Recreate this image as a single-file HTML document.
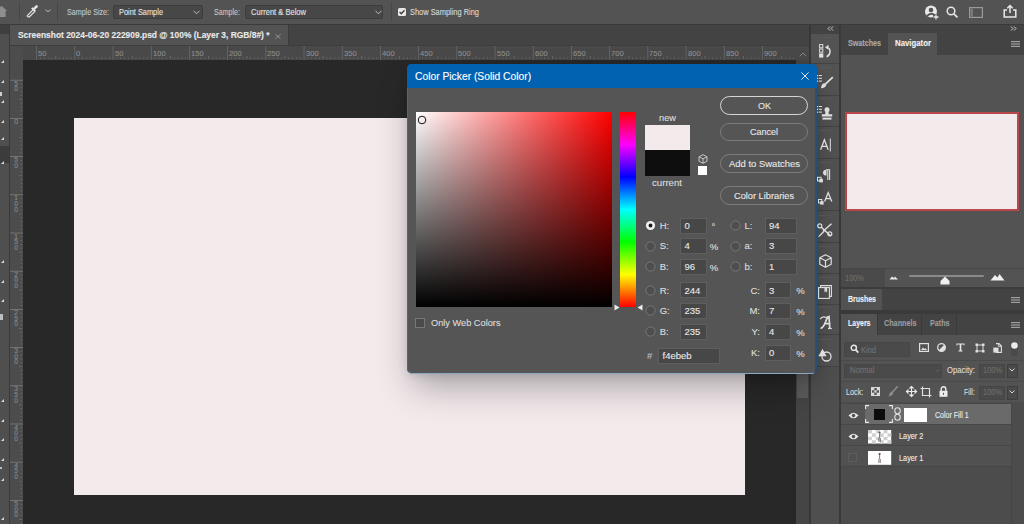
<!DOCTYPE html>
<html><head><meta charset="utf-8">
<style>
*{margin:0;padding:0;box-sizing:border-box}
html,body{width:1024px;height:524px;overflow:hidden;background:#282828;font-family:"Liberation Sans",sans-serif;color:#d8d8d8}
.a{position:absolute}
.t{position:absolute;white-space:nowrap;line-height:1;transform-origin:0 0;-webkit-text-stroke:0.12px currentColor}
svg{position:absolute;overflow:visible}
</style></head><body>
<div class="a" style="left:0px;top:0px;width:1024px;height:24px;background:#535353;"></div>
<div class="a" style="left:0px;top:24px;width:1024px;height:1px;background:#3a3a3a;"></div>
<div class="a" style="left:19px;top:2px;width:1px;height:19px;background:#474747;"></div>
<div class="a" style="left:57px;top:2px;width:1px;height:19px;background:#474747;"></div>
<div class="a" style="left:391px;top:2px;width:1px;height:19px;background:#474747;"></div>
<svg style="left:0;top:5px" width="10" height="13" viewBox="0 0 10 13"><path d="M-3 5.5 L1.5 0.8 L7.2 6 L5.6 6 L5.6 12 L-3 12 Z" fill="#8e8e8e"/></svg>
<svg style="left:24.8px;top:2.5px" width="14" height="15" viewBox="0 0 15 16"><g transform="translate(7.5 8) scale(0.9) translate(-7.5 -8)"><path d="M2.5 13.5 L9 7 L11 9 L4.5 15.5 Q2.8 15.9 2 15 Q1.6 14.3 2.5 13.5 Z" fill="none" stroke="#e6e6e6" stroke-width="1.5"/><path d="M8 6 L12 2 Q13 1.2 14 2 Q14.8 3 14 4 L10 8 Z" fill="#e6e6e6"/><path d="M7.2 4.8 L11.2 8.8" stroke="#e6e6e6" stroke-width="2"/></g></svg>
<svg style="left:45px;top:9px" width="6" height="4" viewBox="0 0 6 4"><path d="M0.5 0.6 Q3 4.2 5.5 0.6" fill="none" stroke="#bdbdbd" stroke-width="1"/></svg>
<div id="t0" class="t" style="left:66.60px;transform:scaleX(0.8104);top:8.00px;font-size:8.8px;color:#c4c4c4;font-weight:normal;">Sample Size:</div>
<div class="a" style="left:113px;top:5px;width:90px;height:14px;background:#474747;border:1px solid #3d3d3d;border-radius:2px"></div>
<div id="t1" class="t" style="left:119.30px;transform:scaleX(0.8408);top:8.00px;font-size:8.8px;color:#e2e2e2;font-weight:normal;">Point Sample</div>
<svg style="left:193px;top:10px" width="7" height="5" viewBox="0 0 7 5"><path d="M0.5 0.8 L3.5 3.8 L6.5 0.8" fill="none" stroke="#bdbdbd" stroke-width="1"/></svg>
<div id="t2" class="t" style="left:213.70px;transform:scaleX(0.8054);top:8.00px;font-size:8.8px;color:#c4c4c4;font-weight:normal;">Sample:</div>
<div class="a" style="left:245px;top:5px;width:138px;height:14px;background:#474747;border:1px solid #3d3d3d;border-radius:2px"></div>
<div id="t3" class="t" style="left:251.40px;transform:scaleX(0.8585);top:8.00px;font-size:8.8px;color:#e2e2e2;font-weight:normal;">Current &amp; Below</div>
<svg style="left:375px;top:10px" width="7" height="5" viewBox="0 0 7 5"><path d="M0.5 0.8 L3.5 3.8 L6.5 0.8" fill="none" stroke="#bdbdbd" stroke-width="1"/></svg>
<div class="a" style="left:398px;top:7.5px;width:8px;height:8px;background:#e8e8e8;border-radius:1.5px"></div>
<svg style="left:398px;top:7.5px" width="8" height="8" viewBox="0 0 8 8"><path d="M1.6 4 L3.3 5.7 L6.5 2.3" fill="none" stroke="#3a3a3a" stroke-width="1.3"/></svg>
<div id="t4" class="t" style="left:409.50px;transform:scaleX(0.8448);top:8.00px;font-size:8.8px;color:#d8d8d8;font-weight:normal;">Show Sampling Ring</div>
<svg style="left:924px;top:5px" width="16" height="15" viewBox="0 0 16 15"><circle cx="7" cy="6.5" r="6" fill="#e8e8e8"/><circle cx="7" cy="5" r="2.3" fill="#535353"/><path d="M3 11 Q7 7 10.5 10" stroke="#535353" stroke-width="2" fill="none"/><path d="M12 9 V15 M9 12 H15" stroke="#535353" stroke-width="3.5"/><path d="M12 9.5 V14.5 M9.5 12 H14.5" stroke="#e8e8e8" stroke-width="1.3"/></svg>
<svg style="left:946px;top:6px" width="13" height="12" viewBox="0 0 13 12"><circle cx="5" cy="5" r="3.8" fill="none" stroke="#e6e6e6" stroke-width="1.5"/><path d="M7.8 7.8 L11.5 11.3" stroke="#e6e6e6" stroke-width="1.7"/></svg>
<svg style="left:969px;top:7px" width="14" height="11" viewBox="0 0 14 11"><rect x="0.6" y="0.6" width="12.8" height="9.8" fill="none" stroke="#9a9a9a" stroke-width="1.2"/><rect x="1.5" y="1.5" width="2.5" height="8" fill="#7a7a7a"/></svg>
<svg style="left:1003px;top:4px" width="14" height="14" viewBox="0 0 14 14"><path d="M4 6 H1.2 V13 H12.8 V6 H10" fill="none" stroke="#e8e8e8" stroke-width="1.5"/><path d="M7 9 V1.5 M4.3 4.2 L7 1.5 L9.7 4.2" fill="none" stroke="#e8e8e8" stroke-width="1.5"/></svg>
<div class="a" style="left:0px;top:25px;width:9px;height:499px;background:#4f4f4f;"></div>
<div class="a" style="left:0px;top:25px;width:9px;height:9px;background:#3f3f3f;"></div>
<div class="a" style="left:9px;top:25px;width:1px;height:499px;background:#3a3a3a;"></div>
<div class="a" style="left:0px;top:146px;width:9px;height:17px;background:#3c3c3c;"></div>
<div class="a" style="left:0px;top:92px;width:2px;height:4px;background:#cfcfcf;"></div>
<div class="a" style="left:0px;top:314px;width:3px;height:6px;background:#bdbdbd;"></div>
<div class="a" style="left:0px;top:467px;width:2px;height:2px;background:#bdbdbd;"></div>
<svg style="left:0.5px;top:60px" width="3" height="3" viewBox="0 0 3 3"><path d="M3 0 V3 H0 Z" fill="#d8d8d8"/></svg>
<svg style="left:0.5px;top:80px" width="3" height="3" viewBox="0 0 3 3"><path d="M3 0 V3 H0 Z" fill="#d8d8d8"/></svg>
<svg style="left:0.5px;top:100px" width="3" height="3" viewBox="0 0 3 3"><path d="M3 0 V3 H0 Z" fill="#d8d8d8"/></svg>
<svg style="left:0.5px;top:120px" width="3" height="3" viewBox="0 0 3 3"><path d="M3 0 V3 H0 Z" fill="#d8d8d8"/></svg>
<svg style="left:0.5px;top:137px" width="3" height="3" viewBox="0 0 3 3"><path d="M3 0 V3 H0 Z" fill="#d8d8d8"/></svg>
<svg style="left:0.5px;top:161px" width="3" height="3" viewBox="0 0 3 3"><path d="M3 0 V3 H0 Z" fill="#d8d8d8"/></svg>
<svg style="left:0.5px;top:260px" width="3" height="3" viewBox="0 0 3 3"><path d="M3 0 V3 H0 Z" fill="#d8d8d8"/></svg>
<svg style="left:0.5px;top:280px" width="3" height="3" viewBox="0 0 3 3"><path d="M3 0 V3 H0 Z" fill="#d8d8d8"/></svg>
<svg style="left:0.5px;top:299px" width="3" height="3" viewBox="0 0 3 3"><path d="M3 0 V3 H0 Z" fill="#d8d8d8"/></svg>
<svg style="left:0.5px;top:399px" width="3" height="3" viewBox="0 0 3 3"><path d="M3 0 V3 H0 Z" fill="#d8d8d8"/></svg>
<svg style="left:0.5px;top:419px" width="3" height="3" viewBox="0 0 3 3"><path d="M3 0 V3 H0 Z" fill="#d8d8d8"/></svg>
<svg style="left:0.5px;top:438px" width="3" height="3" viewBox="0 0 3 3"><path d="M3 0 V3 H0 Z" fill="#d8d8d8"/></svg>
<svg style="left:0.5px;top:458px" width="3" height="3" viewBox="0 0 3 3"><path d="M3 0 V3 H0 Z" fill="#d8d8d8"/></svg>
<svg style="left:0.5px;top:478px" width="3" height="3" viewBox="0 0 3 3"><path d="M3 0 V3 H0 Z" fill="#d8d8d8"/></svg>
<svg style="left:0.5px;top:517px" width="3" height="3" viewBox="0 0 3 3"><path d="M3 0 V3 H0 Z" fill="#d8d8d8"/></svg>
<div class="a" style="left:10px;top:25px;width:799px;height:21px;background:#434343;"></div>
<div class="a" style="left:10px;top:25px;width:278px;height:21px;background:#535353;"></div>
<div class="a" style="left:288px;top:25px;width:1px;height:21px;background:#3c3c3c;"></div>
<div id="t5" class="t" style="left:17.50px;transform:scaleX(0.9794);top:31.00px;font-size:8.6px;color:#e8e8e8;font-weight:bold;">Screenshot 2024-06-20 222909.psd @ 100% (Layer 3, RGB/8#) *</div>
<svg style="left:275px;top:33.5px" width="6" height="5" viewBox="0 0 6 5"><path d="M0.5 0.3 L5.5 4.7 M5.5 0.3 L0.5 4.7" stroke="#9a9a9a" stroke-width="0.9"/></svg>
<div class="a" style="left:10px;top:45px;width:799px;height:1px;background:#3d3d3d;"></div>
<div class="a" style="left:10px;top:46px;width:799px;height:14px;background:#494949;"></div>
<div class="a" style="left:10px;top:46px;width:13px;height:478px;background:#4c4c4c;"></div>
<div id="t6" class="t" style="left:38.10px;transform:scaleX(0.9432);top:50.00px;font-size:8px;color:#8e8e8e;font-weight:normal;">50</div>
<div id="t7" class="t" style="left:76.30px;transform:scaleX(0.9432);top:50.00px;font-size:8px;color:#8e8e8e;font-weight:normal;">0</div>
<div id="t8" class="t" style="left:114.50px;transform:scaleX(0.9432);top:50.00px;font-size:8px;color:#8e8e8e;font-weight:normal;">50</div>
<div id="t9" class="t" style="left:152.70px;transform:scaleX(0.9432);top:50.00px;font-size:8px;color:#8e8e8e;font-weight:normal;">100</div>
<div id="t10" class="t" style="left:190.90px;transform:scaleX(0.9432);top:50.00px;font-size:8px;color:#8e8e8e;font-weight:normal;">150</div>
<div id="t11" class="t" style="left:229.10px;transform:scaleX(0.9432);top:50.00px;font-size:8px;color:#8e8e8e;font-weight:normal;">200</div>
<div id="t12" class="t" style="left:267.30px;transform:scaleX(0.9432);top:50.00px;font-size:8px;color:#8e8e8e;font-weight:normal;">250</div>
<div id="t13" class="t" style="left:305.50px;transform:scaleX(0.9432);top:50.00px;font-size:8px;color:#8e8e8e;font-weight:normal;">300</div>
<div id="t14" class="t" style="left:343.70px;transform:scaleX(0.9432);top:50.00px;font-size:8px;color:#8e8e8e;font-weight:normal;">350</div>
<div id="t15" class="t" style="left:381.90px;transform:scaleX(0.9432);top:50.00px;font-size:8px;color:#8e8e8e;font-weight:normal;">400</div>
<div id="t16" class="t" style="left:420.10px;transform:scaleX(0.9432);top:50.00px;font-size:8px;color:#8e8e8e;font-weight:normal;">450</div>
<div id="t17" class="t" style="left:458.30px;transform:scaleX(0.9432);top:50.00px;font-size:8px;color:#8e8e8e;font-weight:normal;">500</div>
<div id="t18" class="t" style="left:496.50px;transform:scaleX(0.9432);top:50.00px;font-size:8px;color:#8e8e8e;font-weight:normal;">550</div>
<div id="t19" class="t" style="left:534.70px;transform:scaleX(0.9432);top:50.00px;font-size:8px;color:#8e8e8e;font-weight:normal;">600</div>
<div id="t20" class="t" style="left:572.90px;transform:scaleX(0.9432);top:50.00px;font-size:8px;color:#8e8e8e;font-weight:normal;">650</div>
<div id="t21" class="t" style="left:611.10px;transform:scaleX(0.9432);top:50.00px;font-size:8px;color:#8e8e8e;font-weight:normal;">700</div>
<div id="t22" class="t" style="left:649.30px;transform:scaleX(0.9432);top:50.00px;font-size:8px;color:#8e8e8e;font-weight:normal;">750</div>
<div id="t23" class="t" style="left:687.50px;transform:scaleX(0.9432);top:50.00px;font-size:8px;color:#8e8e8e;font-weight:normal;">800</div>
<div id="t24" class="t" style="left:725.70px;transform:scaleX(0.9432);top:50.00px;font-size:8px;color:#8e8e8e;font-weight:normal;">850</div>
<div id="t25" class="t" style="left:763.90px;transform:scaleX(0.9432);top:50.00px;font-size:8px;color:#8e8e8e;font-weight:normal;">900</div>
<svg style="left:0;top:0" width="1024" height="524"><rect x="36.3" y="46" width="0.7" height="14" fill="#6e6e6e"/><rect x="40.1" y="57.5" width="0.8" height="1.5" fill="#6e6e6e"/><rect x="43.9" y="57.5" width="0.8" height="1.5" fill="#6e6e6e"/><rect x="47.8" y="57.5" width="0.8" height="1.5" fill="#6e6e6e"/><rect x="51.6" y="57.5" width="0.8" height="1.5" fill="#6e6e6e"/><rect x="55.4" y="56" width="0.8" height="3" fill="#6e6e6e"/><rect x="59.2" y="57.5" width="0.8" height="1.5" fill="#6e6e6e"/><rect x="63.0" y="57.5" width="0.8" height="1.5" fill="#6e6e6e"/><rect x="66.9" y="57.5" width="0.8" height="1.5" fill="#6e6e6e"/><rect x="70.7" y="57.5" width="0.8" height="1.5" fill="#6e6e6e"/><rect x="74.5" y="46" width="0.7" height="14" fill="#6e6e6e"/><rect x="78.3" y="57.5" width="0.8" height="1.5" fill="#6e6e6e"/><rect x="82.1" y="57.5" width="0.8" height="1.5" fill="#6e6e6e"/><rect x="86.0" y="57.5" width="0.8" height="1.5" fill="#6e6e6e"/><rect x="89.8" y="57.5" width="0.8" height="1.5" fill="#6e6e6e"/><rect x="93.6" y="56" width="0.8" height="3" fill="#6e6e6e"/><rect x="97.4" y="57.5" width="0.8" height="1.5" fill="#6e6e6e"/><rect x="101.2" y="57.5" width="0.8" height="1.5" fill="#6e6e6e"/><rect x="105.1" y="57.5" width="0.8" height="1.5" fill="#6e6e6e"/><rect x="108.9" y="57.5" width="0.8" height="1.5" fill="#6e6e6e"/><rect x="112.7" y="46" width="0.7" height="14" fill="#6e6e6e"/><rect x="116.5" y="57.5" width="0.8" height="1.5" fill="#6e6e6e"/><rect x="120.3" y="57.5" width="0.8" height="1.5" fill="#6e6e6e"/><rect x="124.2" y="57.5" width="0.8" height="1.5" fill="#6e6e6e"/><rect x="128.0" y="57.5" width="0.8" height="1.5" fill="#6e6e6e"/><rect x="131.8" y="56" width="0.8" height="3" fill="#6e6e6e"/><rect x="135.6" y="57.5" width="0.8" height="1.5" fill="#6e6e6e"/><rect x="139.4" y="57.5" width="0.8" height="1.5" fill="#6e6e6e"/><rect x="143.3" y="57.5" width="0.8" height="1.5" fill="#6e6e6e"/><rect x="147.1" y="57.5" width="0.8" height="1.5" fill="#6e6e6e"/><rect x="150.9" y="46" width="0.7" height="14" fill="#6e6e6e"/><rect x="154.7" y="57.5" width="0.8" height="1.5" fill="#6e6e6e"/><rect x="158.5" y="57.5" width="0.8" height="1.5" fill="#6e6e6e"/><rect x="162.4" y="57.5" width="0.8" height="1.5" fill="#6e6e6e"/><rect x="166.2" y="57.5" width="0.8" height="1.5" fill="#6e6e6e"/><rect x="170.0" y="56" width="0.8" height="3" fill="#6e6e6e"/><rect x="173.8" y="57.5" width="0.8" height="1.5" fill="#6e6e6e"/><rect x="177.6" y="57.5" width="0.8" height="1.5" fill="#6e6e6e"/><rect x="181.5" y="57.5" width="0.8" height="1.5" fill="#6e6e6e"/><rect x="185.3" y="57.5" width="0.8" height="1.5" fill="#6e6e6e"/><rect x="189.1" y="46" width="0.7" height="14" fill="#6e6e6e"/><rect x="192.9" y="57.5" width="0.8" height="1.5" fill="#6e6e6e"/><rect x="196.7" y="57.5" width="0.8" height="1.5" fill="#6e6e6e"/><rect x="200.6" y="57.5" width="0.8" height="1.5" fill="#6e6e6e"/><rect x="204.4" y="57.5" width="0.8" height="1.5" fill="#6e6e6e"/><rect x="208.2" y="56" width="0.8" height="3" fill="#6e6e6e"/><rect x="212.0" y="57.5" width="0.8" height="1.5" fill="#6e6e6e"/><rect x="215.8" y="57.5" width="0.8" height="1.5" fill="#6e6e6e"/><rect x="219.7" y="57.5" width="0.8" height="1.5" fill="#6e6e6e"/><rect x="223.5" y="57.5" width="0.8" height="1.5" fill="#6e6e6e"/><rect x="227.3" y="46" width="0.7" height="14" fill="#6e6e6e"/><rect x="231.1" y="57.5" width="0.8" height="1.5" fill="#6e6e6e"/><rect x="234.9" y="57.5" width="0.8" height="1.5" fill="#6e6e6e"/><rect x="238.8" y="57.5" width="0.8" height="1.5" fill="#6e6e6e"/><rect x="242.6" y="57.5" width="0.8" height="1.5" fill="#6e6e6e"/><rect x="246.4" y="56" width="0.8" height="3" fill="#6e6e6e"/><rect x="250.2" y="57.5" width="0.8" height="1.5" fill="#6e6e6e"/><rect x="254.0" y="57.5" width="0.8" height="1.5" fill="#6e6e6e"/><rect x="257.9" y="57.5" width="0.8" height="1.5" fill="#6e6e6e"/><rect x="261.7" y="57.5" width="0.8" height="1.5" fill="#6e6e6e"/><rect x="265.5" y="46" width="0.7" height="14" fill="#6e6e6e"/><rect x="269.3" y="57.5" width="0.8" height="1.5" fill="#6e6e6e"/><rect x="273.1" y="57.5" width="0.8" height="1.5" fill="#6e6e6e"/><rect x="277.0" y="57.5" width="0.8" height="1.5" fill="#6e6e6e"/><rect x="280.8" y="57.5" width="0.8" height="1.5" fill="#6e6e6e"/><rect x="284.6" y="56" width="0.8" height="3" fill="#6e6e6e"/><rect x="288.4" y="57.5" width="0.8" height="1.5" fill="#6e6e6e"/><rect x="292.2" y="57.5" width="0.8" height="1.5" fill="#6e6e6e"/><rect x="296.1" y="57.5" width="0.8" height="1.5" fill="#6e6e6e"/><rect x="299.9" y="57.5" width="0.8" height="1.5" fill="#6e6e6e"/><rect x="303.7" y="46" width="0.7" height="14" fill="#6e6e6e"/><rect x="307.5" y="57.5" width="0.8" height="1.5" fill="#6e6e6e"/><rect x="311.3" y="57.5" width="0.8" height="1.5" fill="#6e6e6e"/><rect x="315.2" y="57.5" width="0.8" height="1.5" fill="#6e6e6e"/><rect x="319.0" y="57.5" width="0.8" height="1.5" fill="#6e6e6e"/><rect x="322.8" y="56" width="0.8" height="3" fill="#6e6e6e"/><rect x="326.6" y="57.5" width="0.8" height="1.5" fill="#6e6e6e"/><rect x="330.4" y="57.5" width="0.8" height="1.5" fill="#6e6e6e"/><rect x="334.3" y="57.5" width="0.8" height="1.5" fill="#6e6e6e"/><rect x="338.1" y="57.5" width="0.8" height="1.5" fill="#6e6e6e"/><rect x="341.9" y="46" width="0.7" height="14" fill="#6e6e6e"/><rect x="345.7" y="57.5" width="0.8" height="1.5" fill="#6e6e6e"/><rect x="349.5" y="57.5" width="0.8" height="1.5" fill="#6e6e6e"/><rect x="353.4" y="57.5" width="0.8" height="1.5" fill="#6e6e6e"/><rect x="357.2" y="57.5" width="0.8" height="1.5" fill="#6e6e6e"/><rect x="361.0" y="56" width="0.8" height="3" fill="#6e6e6e"/><rect x="364.8" y="57.5" width="0.8" height="1.5" fill="#6e6e6e"/><rect x="368.6" y="57.5" width="0.8" height="1.5" fill="#6e6e6e"/><rect x="372.5" y="57.5" width="0.8" height="1.5" fill="#6e6e6e"/><rect x="376.3" y="57.5" width="0.8" height="1.5" fill="#6e6e6e"/><rect x="380.1" y="46" width="0.7" height="14" fill="#6e6e6e"/><rect x="383.9" y="57.5" width="0.8" height="1.5" fill="#6e6e6e"/><rect x="387.7" y="57.5" width="0.8" height="1.5" fill="#6e6e6e"/><rect x="391.6" y="57.5" width="0.8" height="1.5" fill="#6e6e6e"/><rect x="395.4" y="57.5" width="0.8" height="1.5" fill="#6e6e6e"/><rect x="399.2" y="56" width="0.8" height="3" fill="#6e6e6e"/><rect x="403.0" y="57.5" width="0.8" height="1.5" fill="#6e6e6e"/><rect x="406.8" y="57.5" width="0.8" height="1.5" fill="#6e6e6e"/><rect x="410.7" y="57.5" width="0.8" height="1.5" fill="#6e6e6e"/><rect x="414.5" y="57.5" width="0.8" height="1.5" fill="#6e6e6e"/><rect x="418.3" y="46" width="0.7" height="14" fill="#6e6e6e"/><rect x="422.1" y="57.5" width="0.8" height="1.5" fill="#6e6e6e"/><rect x="425.9" y="57.5" width="0.8" height="1.5" fill="#6e6e6e"/><rect x="429.8" y="57.5" width="0.8" height="1.5" fill="#6e6e6e"/><rect x="433.6" y="57.5" width="0.8" height="1.5" fill="#6e6e6e"/><rect x="437.4" y="56" width="0.8" height="3" fill="#6e6e6e"/><rect x="441.2" y="57.5" width="0.8" height="1.5" fill="#6e6e6e"/><rect x="445.0" y="57.5" width="0.8" height="1.5" fill="#6e6e6e"/><rect x="448.9" y="57.5" width="0.8" height="1.5" fill="#6e6e6e"/><rect x="452.7" y="57.5" width="0.8" height="1.5" fill="#6e6e6e"/><rect x="456.5" y="46" width="0.7" height="14" fill="#6e6e6e"/><rect x="460.3" y="57.5" width="0.8" height="1.5" fill="#6e6e6e"/><rect x="464.1" y="57.5" width="0.8" height="1.5" fill="#6e6e6e"/><rect x="468.0" y="57.5" width="0.8" height="1.5" fill="#6e6e6e"/><rect x="471.8" y="57.5" width="0.8" height="1.5" fill="#6e6e6e"/><rect x="475.6" y="56" width="0.8" height="3" fill="#6e6e6e"/><rect x="479.4" y="57.5" width="0.8" height="1.5" fill="#6e6e6e"/><rect x="483.2" y="57.5" width="0.8" height="1.5" fill="#6e6e6e"/><rect x="487.1" y="57.5" width="0.8" height="1.5" fill="#6e6e6e"/><rect x="490.9" y="57.5" width="0.8" height="1.5" fill="#6e6e6e"/><rect x="494.7" y="46" width="0.7" height="14" fill="#6e6e6e"/><rect x="498.5" y="57.5" width="0.8" height="1.5" fill="#6e6e6e"/><rect x="502.3" y="57.5" width="0.8" height="1.5" fill="#6e6e6e"/><rect x="506.2" y="57.5" width="0.8" height="1.5" fill="#6e6e6e"/><rect x="510.0" y="57.5" width="0.8" height="1.5" fill="#6e6e6e"/><rect x="513.8" y="56" width="0.8" height="3" fill="#6e6e6e"/><rect x="517.6" y="57.5" width="0.8" height="1.5" fill="#6e6e6e"/><rect x="521.4" y="57.5" width="0.8" height="1.5" fill="#6e6e6e"/><rect x="525.3" y="57.5" width="0.8" height="1.5" fill="#6e6e6e"/><rect x="529.1" y="57.5" width="0.8" height="1.5" fill="#6e6e6e"/><rect x="532.9" y="46" width="0.7" height="14" fill="#6e6e6e"/><rect x="536.7" y="57.5" width="0.8" height="1.5" fill="#6e6e6e"/><rect x="540.5" y="57.5" width="0.8" height="1.5" fill="#6e6e6e"/><rect x="544.4" y="57.5" width="0.8" height="1.5" fill="#6e6e6e"/><rect x="548.2" y="57.5" width="0.8" height="1.5" fill="#6e6e6e"/><rect x="552.0" y="56" width="0.8" height="3" fill="#6e6e6e"/><rect x="555.8" y="57.5" width="0.8" height="1.5" fill="#6e6e6e"/><rect x="559.6" y="57.5" width="0.8" height="1.5" fill="#6e6e6e"/><rect x="563.5" y="57.5" width="0.8" height="1.5" fill="#6e6e6e"/><rect x="567.3" y="57.5" width="0.8" height="1.5" fill="#6e6e6e"/><rect x="571.1" y="46" width="0.7" height="14" fill="#6e6e6e"/><rect x="574.9" y="57.5" width="0.8" height="1.5" fill="#6e6e6e"/><rect x="578.7" y="57.5" width="0.8" height="1.5" fill="#6e6e6e"/><rect x="582.6" y="57.5" width="0.8" height="1.5" fill="#6e6e6e"/><rect x="586.4" y="57.5" width="0.8" height="1.5" fill="#6e6e6e"/><rect x="590.2" y="56" width="0.8" height="3" fill="#6e6e6e"/><rect x="594.0" y="57.5" width="0.8" height="1.5" fill="#6e6e6e"/><rect x="597.8" y="57.5" width="0.8" height="1.5" fill="#6e6e6e"/><rect x="601.7" y="57.5" width="0.8" height="1.5" fill="#6e6e6e"/><rect x="605.5" y="57.5" width="0.8" height="1.5" fill="#6e6e6e"/><rect x="609.3" y="46" width="0.7" height="14" fill="#6e6e6e"/><rect x="613.1" y="57.5" width="0.8" height="1.5" fill="#6e6e6e"/><rect x="616.9" y="57.5" width="0.8" height="1.5" fill="#6e6e6e"/><rect x="620.8" y="57.5" width="0.8" height="1.5" fill="#6e6e6e"/><rect x="624.6" y="57.5" width="0.8" height="1.5" fill="#6e6e6e"/><rect x="628.4" y="56" width="0.8" height="3" fill="#6e6e6e"/><rect x="632.2" y="57.5" width="0.8" height="1.5" fill="#6e6e6e"/><rect x="636.0" y="57.5" width="0.8" height="1.5" fill="#6e6e6e"/><rect x="639.9" y="57.5" width="0.8" height="1.5" fill="#6e6e6e"/><rect x="643.7" y="57.5" width="0.8" height="1.5" fill="#6e6e6e"/><rect x="647.5" y="46" width="0.7" height="14" fill="#6e6e6e"/><rect x="651.3" y="57.5" width="0.8" height="1.5" fill="#6e6e6e"/><rect x="655.1" y="57.5" width="0.8" height="1.5" fill="#6e6e6e"/><rect x="659.0" y="57.5" width="0.8" height="1.5" fill="#6e6e6e"/><rect x="662.8" y="57.5" width="0.8" height="1.5" fill="#6e6e6e"/><rect x="666.6" y="56" width="0.8" height="3" fill="#6e6e6e"/><rect x="670.4" y="57.5" width="0.8" height="1.5" fill="#6e6e6e"/><rect x="674.2" y="57.5" width="0.8" height="1.5" fill="#6e6e6e"/><rect x="678.1" y="57.5" width="0.8" height="1.5" fill="#6e6e6e"/><rect x="681.9" y="57.5" width="0.8" height="1.5" fill="#6e6e6e"/><rect x="685.7" y="46" width="0.7" height="14" fill="#6e6e6e"/><rect x="689.5" y="57.5" width="0.8" height="1.5" fill="#6e6e6e"/><rect x="693.3" y="57.5" width="0.8" height="1.5" fill="#6e6e6e"/><rect x="697.2" y="57.5" width="0.8" height="1.5" fill="#6e6e6e"/><rect x="701.0" y="57.5" width="0.8" height="1.5" fill="#6e6e6e"/><rect x="704.8" y="56" width="0.8" height="3" fill="#6e6e6e"/><rect x="708.6" y="57.5" width="0.8" height="1.5" fill="#6e6e6e"/><rect x="712.4" y="57.5" width="0.8" height="1.5" fill="#6e6e6e"/><rect x="716.3" y="57.5" width="0.8" height="1.5" fill="#6e6e6e"/><rect x="720.1" y="57.5" width="0.8" height="1.5" fill="#6e6e6e"/><rect x="723.9" y="46" width="0.7" height="14" fill="#6e6e6e"/><rect x="727.7" y="57.5" width="0.8" height="1.5" fill="#6e6e6e"/><rect x="731.5" y="57.5" width="0.8" height="1.5" fill="#6e6e6e"/><rect x="735.4" y="57.5" width="0.8" height="1.5" fill="#6e6e6e"/><rect x="739.2" y="57.5" width="0.8" height="1.5" fill="#6e6e6e"/><rect x="743.0" y="56" width="0.8" height="3" fill="#6e6e6e"/><rect x="746.8" y="57.5" width="0.8" height="1.5" fill="#6e6e6e"/><rect x="750.6" y="57.5" width="0.8" height="1.5" fill="#6e6e6e"/><rect x="754.5" y="57.5" width="0.8" height="1.5" fill="#6e6e6e"/><rect x="758.3" y="57.5" width="0.8" height="1.5" fill="#6e6e6e"/><rect x="762.1" y="46" width="0.7" height="14" fill="#6e6e6e"/><rect x="765.9" y="57.5" width="0.8" height="1.5" fill="#6e6e6e"/><rect x="769.7" y="57.5" width="0.8" height="1.5" fill="#6e6e6e"/><rect x="773.6" y="57.5" width="0.8" height="1.5" fill="#6e6e6e"/><rect x="777.4" y="57.5" width="0.8" height="1.5" fill="#6e6e6e"/><rect x="781.2" y="56" width="0.8" height="3" fill="#6e6e6e"/><rect x="785.0" y="57.5" width="0.8" height="1.5" fill="#6e6e6e"/><rect x="788.8" y="57.5" width="0.8" height="1.5" fill="#6e6e6e"/><rect x="792.7" y="57.5" width="0.8" height="1.5" fill="#6e6e6e"/></svg>
<div id="t26" class="t" style="left:14.30px;top:81.00px;font-size:6.6px;color:#8a8a8a;font-weight:normal;">5</div>
<div id="t27" class="t" style="left:14.30px;top:86.00px;font-size:6.6px;color:#8a8a8a;font-weight:normal;">0</div>
<div id="t28" class="t" style="left:14.30px;top:119.00px;font-size:6.6px;color:#8a8a8a;font-weight:normal;">0</div>
<div id="t29" class="t" style="left:14.30px;top:157.00px;font-size:6.6px;color:#8a8a8a;font-weight:normal;">5</div>
<div id="t30" class="t" style="left:14.30px;top:163.00px;font-size:6.6px;color:#8a8a8a;font-weight:normal;">0</div>
<div id="t31" class="t" style="left:14.30px;top:195.00px;font-size:6.6px;color:#8a8a8a;font-weight:normal;">1</div>
<div id="t32" class="t" style="left:14.30px;top:201.00px;font-size:6.6px;color:#8a8a8a;font-weight:normal;">0</div>
<div id="t33" class="t" style="left:14.30px;top:207.00px;font-size:6.6px;color:#8a8a8a;font-weight:normal;">0</div>
<div id="t34" class="t" style="left:14.30px;top:234.00px;font-size:6.6px;color:#8a8a8a;font-weight:normal;">1</div>
<div id="t35" class="t" style="left:14.30px;top:239.00px;font-size:6.6px;color:#8a8a8a;font-weight:normal;">5</div>
<div id="t36" class="t" style="left:14.30px;top:245.00px;font-size:6.6px;color:#8a8a8a;font-weight:normal;">0</div>
<div id="t37" class="t" style="left:14.30px;top:272.00px;font-size:6.6px;color:#8a8a8a;font-weight:normal;">2</div>
<div id="t38" class="t" style="left:14.30px;top:277.00px;font-size:6.6px;color:#8a8a8a;font-weight:normal;">0</div>
<div id="t39" class="t" style="left:14.30px;top:283.00px;font-size:6.6px;color:#8a8a8a;font-weight:normal;">0</div>
<div id="t40" class="t" style="left:14.30px;top:310.00px;font-size:6.6px;color:#8a8a8a;font-weight:normal;">2</div>
<div id="t41" class="t" style="left:14.30px;top:316.00px;font-size:6.6px;color:#8a8a8a;font-weight:normal;">5</div>
<div id="t42" class="t" style="left:14.30px;top:321.00px;font-size:6.6px;color:#8a8a8a;font-weight:normal;">0</div>
<div id="t43" class="t" style="left:14.30px;top:348.00px;font-size:6.6px;color:#8a8a8a;font-weight:normal;">3</div>
<div id="t44" class="t" style="left:14.30px;top:354.00px;font-size:6.6px;color:#8a8a8a;font-weight:normal;">0</div>
<div id="t45" class="t" style="left:14.30px;top:359.00px;font-size:6.6px;color:#8a8a8a;font-weight:normal;">0</div>
<div id="t46" class="t" style="left:14.30px;top:386.00px;font-size:6.6px;color:#8a8a8a;font-weight:normal;">3</div>
<div id="t47" class="t" style="left:14.30px;top:392.00px;font-size:6.6px;color:#8a8a8a;font-weight:normal;">5</div>
<div id="t48" class="t" style="left:14.30px;top:398.00px;font-size:6.6px;color:#8a8a8a;font-weight:normal;">0</div>
<div id="t49" class="t" style="left:14.30px;top:425.00px;font-size:6.6px;color:#8a8a8a;font-weight:normal;">4</div>
<div id="t50" class="t" style="left:14.30px;top:430.00px;font-size:6.6px;color:#8a8a8a;font-weight:normal;">0</div>
<div id="t51" class="t" style="left:14.30px;top:436.00px;font-size:6.6px;color:#8a8a8a;font-weight:normal;">0</div>
<div id="t52" class="t" style="left:14.30px;top:463.00px;font-size:6.6px;color:#8a8a8a;font-weight:normal;">4</div>
<div id="t53" class="t" style="left:14.30px;top:468.00px;font-size:6.6px;color:#8a8a8a;font-weight:normal;">5</div>
<div id="t54" class="t" style="left:14.30px;top:474.00px;font-size:6.6px;color:#8a8a8a;font-weight:normal;">0</div>
<div id="t55" class="t" style="left:14.30px;top:501.00px;font-size:6.6px;color:#8a8a8a;font-weight:normal;">5</div>
<div id="t56" class="t" style="left:14.30px;top:507.00px;font-size:6.6px;color:#8a8a8a;font-weight:normal;">0</div>
<div id="t57" class="t" style="left:14.30px;top:512.00px;font-size:6.6px;color:#8a8a8a;font-weight:normal;">0</div>
<svg style="left:0;top:0" width="1024" height="524"><rect x="10" y="79.8" width="13" height="0.8" fill="#7c7c7c"/><rect x="20.5" y="83.6" width="1.5" height="0.8" fill="#6e6e6e"/><rect x="20.5" y="87.4" width="1.5" height="0.8" fill="#6e6e6e"/><rect x="20.5" y="91.3" width="1.5" height="0.8" fill="#6e6e6e"/><rect x="20.5" y="95.1" width="1.5" height="0.8" fill="#6e6e6e"/><rect x="19" y="98.9" width="3" height="0.8" fill="#6e6e6e"/><rect x="20.5" y="102.7" width="1.5" height="0.8" fill="#6e6e6e"/><rect x="20.5" y="106.5" width="1.5" height="0.8" fill="#6e6e6e"/><rect x="20.5" y="110.4" width="1.5" height="0.8" fill="#6e6e6e"/><rect x="20.5" y="114.2" width="1.5" height="0.8" fill="#6e6e6e"/><rect x="10" y="118.0" width="13" height="0.8" fill="#7c7c7c"/><rect x="20.5" y="121.8" width="1.5" height="0.8" fill="#6e6e6e"/><rect x="20.5" y="125.6" width="1.5" height="0.8" fill="#6e6e6e"/><rect x="20.5" y="129.5" width="1.5" height="0.8" fill="#6e6e6e"/><rect x="20.5" y="133.3" width="1.5" height="0.8" fill="#6e6e6e"/><rect x="19" y="137.1" width="3" height="0.8" fill="#6e6e6e"/><rect x="20.5" y="140.9" width="1.5" height="0.8" fill="#6e6e6e"/><rect x="20.5" y="144.7" width="1.5" height="0.8" fill="#6e6e6e"/><rect x="20.5" y="148.6" width="1.5" height="0.8" fill="#6e6e6e"/><rect x="20.5" y="152.4" width="1.5" height="0.8" fill="#6e6e6e"/><rect x="10" y="156.2" width="13" height="0.8" fill="#7c7c7c"/><rect x="20.5" y="160.0" width="1.5" height="0.8" fill="#6e6e6e"/><rect x="20.5" y="163.8" width="1.5" height="0.8" fill="#6e6e6e"/><rect x="20.5" y="167.7" width="1.5" height="0.8" fill="#6e6e6e"/><rect x="20.5" y="171.5" width="1.5" height="0.8" fill="#6e6e6e"/><rect x="19" y="175.3" width="3" height="0.8" fill="#6e6e6e"/><rect x="20.5" y="179.1" width="1.5" height="0.8" fill="#6e6e6e"/><rect x="20.5" y="182.9" width="1.5" height="0.8" fill="#6e6e6e"/><rect x="20.5" y="186.8" width="1.5" height="0.8" fill="#6e6e6e"/><rect x="20.5" y="190.6" width="1.5" height="0.8" fill="#6e6e6e"/><rect x="10" y="194.4" width="13" height="0.8" fill="#7c7c7c"/><rect x="20.5" y="198.2" width="1.5" height="0.8" fill="#6e6e6e"/><rect x="20.5" y="202.0" width="1.5" height="0.8" fill="#6e6e6e"/><rect x="20.5" y="205.9" width="1.5" height="0.8" fill="#6e6e6e"/><rect x="20.5" y="209.7" width="1.5" height="0.8" fill="#6e6e6e"/><rect x="19" y="213.5" width="3" height="0.8" fill="#6e6e6e"/><rect x="20.5" y="217.3" width="1.5" height="0.8" fill="#6e6e6e"/><rect x="20.5" y="221.1" width="1.5" height="0.8" fill="#6e6e6e"/><rect x="20.5" y="225.0" width="1.5" height="0.8" fill="#6e6e6e"/><rect x="20.5" y="228.8" width="1.5" height="0.8" fill="#6e6e6e"/><rect x="10" y="232.6" width="13" height="0.8" fill="#7c7c7c"/><rect x="20.5" y="236.4" width="1.5" height="0.8" fill="#6e6e6e"/><rect x="20.5" y="240.2" width="1.5" height="0.8" fill="#6e6e6e"/><rect x="20.5" y="244.1" width="1.5" height="0.8" fill="#6e6e6e"/><rect x="20.5" y="247.9" width="1.5" height="0.8" fill="#6e6e6e"/><rect x="19" y="251.7" width="3" height="0.8" fill="#6e6e6e"/><rect x="20.5" y="255.5" width="1.5" height="0.8" fill="#6e6e6e"/><rect x="20.5" y="259.3" width="1.5" height="0.8" fill="#6e6e6e"/><rect x="20.5" y="263.2" width="1.5" height="0.8" fill="#6e6e6e"/><rect x="20.5" y="267.0" width="1.5" height="0.8" fill="#6e6e6e"/><rect x="10" y="270.8" width="13" height="0.8" fill="#7c7c7c"/><rect x="20.5" y="274.6" width="1.5" height="0.8" fill="#6e6e6e"/><rect x="20.5" y="278.4" width="1.5" height="0.8" fill="#6e6e6e"/><rect x="20.5" y="282.3" width="1.5" height="0.8" fill="#6e6e6e"/><rect x="20.5" y="286.1" width="1.5" height="0.8" fill="#6e6e6e"/><rect x="19" y="289.9" width="3" height="0.8" fill="#6e6e6e"/><rect x="20.5" y="293.7" width="1.5" height="0.8" fill="#6e6e6e"/><rect x="20.5" y="297.5" width="1.5" height="0.8" fill="#6e6e6e"/><rect x="20.5" y="301.4" width="1.5" height="0.8" fill="#6e6e6e"/><rect x="20.5" y="305.2" width="1.5" height="0.8" fill="#6e6e6e"/><rect x="10" y="309.0" width="13" height="0.8" fill="#7c7c7c"/><rect x="20.5" y="312.8" width="1.5" height="0.8" fill="#6e6e6e"/><rect x="20.5" y="316.6" width="1.5" height="0.8" fill="#6e6e6e"/><rect x="20.5" y="320.5" width="1.5" height="0.8" fill="#6e6e6e"/><rect x="20.5" y="324.3" width="1.5" height="0.8" fill="#6e6e6e"/><rect x="19" y="328.1" width="3" height="0.8" fill="#6e6e6e"/><rect x="20.5" y="331.9" width="1.5" height="0.8" fill="#6e6e6e"/><rect x="20.5" y="335.7" width="1.5" height="0.8" fill="#6e6e6e"/><rect x="20.5" y="339.6" width="1.5" height="0.8" fill="#6e6e6e"/><rect x="20.5" y="343.4" width="1.5" height="0.8" fill="#6e6e6e"/><rect x="10" y="347.2" width="13" height="0.8" fill="#7c7c7c"/><rect x="20.5" y="351.0" width="1.5" height="0.8" fill="#6e6e6e"/><rect x="20.5" y="354.8" width="1.5" height="0.8" fill="#6e6e6e"/><rect x="20.5" y="358.7" width="1.5" height="0.8" fill="#6e6e6e"/><rect x="20.5" y="362.5" width="1.5" height="0.8" fill="#6e6e6e"/><rect x="19" y="366.3" width="3" height="0.8" fill="#6e6e6e"/><rect x="20.5" y="370.1" width="1.5" height="0.8" fill="#6e6e6e"/><rect x="20.5" y="373.9" width="1.5" height="0.8" fill="#6e6e6e"/><rect x="20.5" y="377.8" width="1.5" height="0.8" fill="#6e6e6e"/><rect x="20.5" y="381.6" width="1.5" height="0.8" fill="#6e6e6e"/><rect x="10" y="385.4" width="13" height="0.8" fill="#7c7c7c"/><rect x="20.5" y="389.2" width="1.5" height="0.8" fill="#6e6e6e"/><rect x="20.5" y="393.0" width="1.5" height="0.8" fill="#6e6e6e"/><rect x="20.5" y="396.9" width="1.5" height="0.8" fill="#6e6e6e"/><rect x="20.5" y="400.7" width="1.5" height="0.8" fill="#6e6e6e"/><rect x="19" y="404.5" width="3" height="0.8" fill="#6e6e6e"/><rect x="20.5" y="408.3" width="1.5" height="0.8" fill="#6e6e6e"/><rect x="20.5" y="412.1" width="1.5" height="0.8" fill="#6e6e6e"/><rect x="20.5" y="416.0" width="1.5" height="0.8" fill="#6e6e6e"/><rect x="20.5" y="419.8" width="1.5" height="0.8" fill="#6e6e6e"/><rect x="10" y="423.6" width="13" height="0.8" fill="#7c7c7c"/><rect x="20.5" y="427.4" width="1.5" height="0.8" fill="#6e6e6e"/><rect x="20.5" y="431.2" width="1.5" height="0.8" fill="#6e6e6e"/><rect x="20.5" y="435.1" width="1.5" height="0.8" fill="#6e6e6e"/><rect x="20.5" y="438.9" width="1.5" height="0.8" fill="#6e6e6e"/><rect x="19" y="442.7" width="3" height="0.8" fill="#6e6e6e"/><rect x="20.5" y="446.5" width="1.5" height="0.8" fill="#6e6e6e"/><rect x="20.5" y="450.3" width="1.5" height="0.8" fill="#6e6e6e"/><rect x="20.5" y="454.2" width="1.5" height="0.8" fill="#6e6e6e"/><rect x="20.5" y="458.0" width="1.5" height="0.8" fill="#6e6e6e"/><rect x="10" y="461.8" width="13" height="0.8" fill="#7c7c7c"/><rect x="20.5" y="465.6" width="1.5" height="0.8" fill="#6e6e6e"/><rect x="20.5" y="469.4" width="1.5" height="0.8" fill="#6e6e6e"/><rect x="20.5" y="473.3" width="1.5" height="0.8" fill="#6e6e6e"/><rect x="20.5" y="477.1" width="1.5" height="0.8" fill="#6e6e6e"/><rect x="19" y="480.9" width="3" height="0.8" fill="#6e6e6e"/><rect x="20.5" y="484.7" width="1.5" height="0.8" fill="#6e6e6e"/><rect x="20.5" y="488.5" width="1.5" height="0.8" fill="#6e6e6e"/><rect x="20.5" y="492.4" width="1.5" height="0.8" fill="#6e6e6e"/><rect x="20.5" y="496.2" width="1.5" height="0.8" fill="#6e6e6e"/><rect x="10" y="500.0" width="13" height="0.8" fill="#7c7c7c"/><rect x="20.5" y="503.8" width="1.5" height="0.8" fill="#6e6e6e"/><rect x="20.5" y="507.6" width="1.5" height="0.8" fill="#6e6e6e"/><rect x="20.5" y="511.5" width="1.5" height="0.8" fill="#6e6e6e"/><rect x="20.5" y="515.3" width="1.5" height="0.8" fill="#6e6e6e"/><rect x="19" y="519.1" width="3" height="0.8" fill="#6e6e6e"/><rect x="20.5" y="522.9" width="1.5" height="0.8" fill="#6e6e6e"/><rect x="20.5" y="526.7" width="1.5" height="0.8" fill="#6e6e6e"/><rect x="20.5" y="530.6" width="1.5" height="0.8" fill="#6e6e6e"/><rect x="20.5" y="534.4" width="1.5" height="0.8" fill="#6e6e6e"/></svg>
<div class="a" style="left:23px;top:60px;width:773px;height:464px;background:#282828;"></div>
<div class="a" style="left:74px;top:118px;width:671px;height:377px;background:#f3eaec;"></div>
<div class="a" style="left:796px;top:46px;width:13px;height:478px;background:#454545;"></div>
<div class="a" style="left:796px;top:46px;width:13px;height:14px;background:#494949;"></div>
<svg style="left:799px;top:52px" width="8" height="5" viewBox="0 0 8 5"><path d="M0.8 4.2 L4 1 L7.2 4.2" fill="none" stroke="#8a8a8a" stroke-width="1"/></svg>
<div class="a" style="left:797px;top:64px;width:11px;height:334px;background:#5c5c5c;"></div>
<div class="a" style="left:809px;top:25px;width:2px;height:499px;background:#383838;"></div>
<div class="a" style="left:811px;top:25px;width:28px;height:499px;background:#4f4f4f;"></div>
<div class="a" style="left:811px;top:25px;width:28px;height:8.5px;background:#434343;"></div>
<svg style="left:827px;top:26px" width="7" height="5" viewBox="0 0 7 5"><path d="M3 0.5 L1 2.5 L3 4.5 M6 0.5 L4 2.5 L6 4.5" fill="none" stroke="#d0d0d0" stroke-width="1"/></svg>
<div class="a" style="left:811px;top:33.5px;width:28px;height:29.5px;background:#535353;"></div>
<div class="a" style="left:811px;top:63px;width:28px;height:1px;background:#444444;"></div>
<div class="a" style="left:811px;top:64px;width:28px;height:30.5px;background:#535353;"></div>
<div class="a" style="left:811px;top:94.5px;width:28px;height:1px;background:#444444;"></div>
<div class="a" style="left:811px;top:95.5px;width:28px;height:30.5px;background:#535353;"></div>
<div class="a" style="left:811px;top:126px;width:28px;height:1px;background:#444444;"></div>
<div class="a" style="left:811px;top:127px;width:28px;height:30.5px;background:#535353;"></div>
<div class="a" style="left:811px;top:157.5px;width:28px;height:1px;background:#444444;"></div>
<div class="a" style="left:811px;top:158.5px;width:28px;height:51.5px;background:#535353;"></div>
<div class="a" style="left:811px;top:210px;width:28px;height:1px;background:#444444;"></div>
<div class="a" style="left:811px;top:211px;width:28px;height:30.5px;background:#535353;"></div>
<div class="a" style="left:811px;top:241.5px;width:28px;height:1px;background:#444444;"></div>
<div class="a" style="left:811px;top:242.5px;width:28px;height:30.0px;background:#535353;"></div>
<div class="a" style="left:811px;top:272.5px;width:28px;height:1px;background:#444444;"></div>
<div class="a" style="left:811px;top:273.5px;width:28px;height:30.0px;background:#535353;"></div>
<div class="a" style="left:811px;top:303.5px;width:28px;height:1px;background:#444444;"></div>
<div class="a" style="left:811px;top:304.5px;width:28px;height:29.5px;background:#535353;"></div>
<div class="a" style="left:811px;top:334px;width:28px;height:1px;background:#444444;"></div>
<div class="a" style="left:811px;top:335px;width:28px;height:31px;background:#535353;"></div>
<div class="a" style="left:811px;top:366px;width:28px;height:1px;background:#444444;"></div>
<div class="a" style="left:839px;top:25px;width:2px;height:499px;background:#3a3a3a;"></div>
<div class="a" style="left:841px;top:25px;width:183px;height:499px;background:#535353;"></div>
<div class="a" style="left:841px;top:25px;width:183px;height:8.5px;background:#434343;"></div>
<svg style="left:1010px;top:26px" width="7" height="5" viewBox="0 0 7 5"><path d="M1 0.5 L3 2.5 L1 4.5 M4 0.5 L6 2.5 L4 4.5" fill="none" stroke="#d0d0d0" stroke-width="1"/></svg>
<div class="a" style="left:841px;top:33px;width:183px;height:22px;background:#434343;"></div>
<div class="a" style="left:888px;top:33px;width:49px;height:22px;background:#535353;"></div>
<div id="t58" class="t" style="left:847.80px;transform:scaleX(0.8414);top:39.00px;font-size:8.5px;color:#a9a9a9;font-weight:bold;">Swatches</div>
<div id="t59" class="t" style="left:894.60px;transform:scaleX(0.9179);top:39.00px;font-size:8.5px;color:#f0f0f0;font-weight:bold;">Navigator</div>
<svg style="left:1011px;top:41px" width="9" height="6" viewBox="0 0 9 6"><rect y="0" width="9" height="1.2" fill="#a0a0a0"/><rect y="2.4" width="9" height="1.2" fill="#a0a0a0"/><rect y="4.8" width="9" height="1.2" fill="#a0a0a0"/></svg>
<div class="a" style="left:844.5px;top:112px;width:174px;height:98.5px;background:#f3eaec;border:2px solid #b8464b"></div>
<div class="a" style="left:841px;top:268px;width:183px;height:1px;background:#474747;"></div>
<div class="a" style="left:841px;top:269px;width:44px;height:18px;background:#4a4a4a;"></div>
<div id="t60" class="t" style="left:845.00px;transform:scaleX(0.8736);top:274.00px;font-size:8.5px;color:#6e6e6e;font-weight:normal;">100%</div>
<svg style="left:889px;top:275px" width="10" height="5" viewBox="0 0 10 5"><path d="M0.5 4.5 L3 1.5 L5 3 L6 1.5 L9 4.5 Z" fill="#e8e8e8"/></svg>
<div class="a" style="left:908.5px;top:275px;width:75.5px;height:2px;background:#8a8a8a;border-radius:1px"></div>
<svg style="left:940px;top:276px" width="10" height="9" viewBox="0 0 10 9"><path d="M5 0.5 L9.5 5 V8.5 H0.5 V5 Z" fill="#f0f0f0"/></svg>
<svg style="left:990px;top:273px" width="15" height="8" viewBox="0 0 15 8"><path d="M0.5 7.5 L5 2 L7.5 4.5 L9.5 1 L14.5 7.5 Z" fill="#f0f0f0"/></svg>
<div class="a" style="left:841px;top:287px;width:183px;height:2px;background:#3c3c3c;"></div>
<div class="a" style="left:841px;top:289px;width:183px;height:21px;background:#434343;"></div>
<div class="a" style="left:841px;top:289px;width:41px;height:21px;background:#535353;"></div>
<div id="t61" class="t" style="left:848.00px;transform:scaleX(0.8232);top:295.00px;font-size:8.5px;color:#efefef;font-weight:bold;">Brushes</div>
<svg style="left:1011px;top:297px" width="9" height="6" viewBox="0 0 9 6"><rect y="0" width="9" height="1.2" fill="#a0a0a0"/><rect y="2.4" width="9" height="1.2" fill="#a0a0a0"/><rect y="4.8" width="9" height="1.2" fill="#a0a0a0"/></svg>
<div class="a" style="left:841px;top:310px;width:183px;height:3.5px;background:#3a3a3a;"></div>
<div class="a" style="left:841px;top:313.5px;width:183px;height:21px;background:#434343;"></div>
<div class="a" style="left:841px;top:313.5px;width:36px;height:21px;background:#535353;"></div>
<div class="a" style="left:921px;top:313.5px;width:1px;height:21px;background:#3a3a3a;"></div>
<div class="a" style="left:956px;top:313.5px;width:1px;height:21px;background:#3a3a3a;"></div>
<div class="a" style="left:877px;top:313.5px;width:1px;height:21px;background:#3a3a3a;"></div>
<div id="t62" class="t" style="left:848.00px;transform:scaleX(0.8205);top:319.00px;font-size:8.5px;color:#efefef;font-weight:bold;">Layers</div>
<div id="t63" class="t" style="left:883.80px;transform:scaleX(0.8493);top:319.00px;font-size:8.5px;color:#9c9c9c;font-weight:bold;">Channels</div>
<div id="t64" class="t" style="left:929.90px;transform:scaleX(0.8421);top:319.00px;font-size:8.5px;color:#9c9c9c;font-weight:bold;">Paths</div>
<svg style="left:1011px;top:322px" width="9" height="6" viewBox="0 0 9 6"><rect y="0" width="9" height="1.2" fill="#a0a0a0"/><rect y="2.4" width="9" height="1.2" fill="#a0a0a0"/><rect y="4.8" width="9" height="1.2" fill="#a0a0a0"/></svg>
<div class="a" style="left:844px;top:341.5px;width:66px;height:15px;background:#4a4a4a;border:1px solid #464646;border-radius:1px"></div>
<svg style="left:850px;top:344px" width="9" height="10" viewBox="0 0 9 10"><circle cx="3.8" cy="3.8" r="2.6" fill="none" stroke="#e8e8e8" stroke-width="1.4"/><path d="M5.6 5.6 L8.3 8.6" stroke="#e8e8e8" stroke-width="1.7"/></svg>
<div id="t65" class="t" style="left:861.00px;transform:scaleX(0.8815);top:346.00px;font-size:8.5px;color:#737373;font-weight:normal;">Kind</div>
<svg style="left:919px;top:343px" width="10" height="9" viewBox="0 0 10 9"><rect x="0.6" y="0.6" width="8.8" height="7.8" fill="none" stroke="#e0e0e0" stroke-width="1.2"/><path d="M2 7 L4 4.5 L5.5 6 L6.5 5 L8 7 Z" fill="#e0e0e0"/></svg>
<svg style="left:937px;top:343px" width="9" height="9" viewBox="0 0 9 9"><circle cx="4.5" cy="4.5" r="3.8" fill="none" stroke="#e0e0e0" stroke-width="1.3"/><path d="M4.5 0.7 A3.8 3.8 0 0 1 4.5 8.3 Z" fill="#e0e0e0" transform="rotate(45 4.5 4.5)"/></svg>
<svg style="left:956px;top:343px" width="9" height="9" viewBox="0 0 9 9"><path d="M0.5 0.5 H8.5 V2.5 H7.7 V1.5 H5.3 V7.6 H6.5 V8.5 H2.5 V7.6 H3.7 V1.5 H1.3 V2.5 H0.5 Z" fill="#e8e8e8"/></svg>
<svg style="left:975px;top:343px" width="10" height="10" viewBox="0 0 10 10"><rect x="2" y="2" width="6" height="6" fill="none" stroke="#e0e0e0" stroke-width="1"/><rect x="0.5" y="0.5" width="2.5" height="2.5" fill="#e0e0e0"/><rect x="7" y="0.5" width="2.5" height="2.5" fill="#e0e0e0"/><rect x="0.5" y="7" width="2.5" height="2.5" fill="#e0e0e0"/><rect x="7" y="7" width="2.5" height="2.5" fill="#e0e0e0"/></svg>
<svg style="left:993px;top:343px" width="9" height="10" viewBox="0 0 9 10"><path d="M3 0.6 H6 L8.4 3 V9.4 H3" fill="none" stroke="#e0e0e0" stroke-width="1.1"/><path d="M5.6 0.6 V3.4 H8.4" fill="none" stroke="#e0e0e0" stroke-width="0.9"/><rect x="0.3" y="4.6" width="5.2" height="5" fill="#e0e0e0"/></svg>
<div class="a" style="left:1011px;top:342px;width:7px;height:14px;background:#4a4a4a;border-radius:4px"></div>
<svg style="left:1011px;top:342px" width="7" height="7" viewBox="0 0 7 7"><circle cx="3.5" cy="3.5" r="3.3" fill="#ececec"/></svg>
<div class="a" style="left:841px;top:359.5px;width:183px;height:1px;background:#4a4a4a;"></div>
<div class="a" style="left:844px;top:363.5px;width:98px;height:14px;background:#4a4a4a;border:1px solid #464646"></div>
<div id="t66" class="t" style="left:850.00px;transform:scaleX(0.8903);top:366.00px;font-size:8.5px;color:#727272;font-weight:normal;">Normal</div>
<svg style="left:935px;top:369px" width="5" height="4" viewBox="0 0 5 4"><path d="M0.5 0.5 L2.5 2.5 L4.5 0.5" fill="none" stroke="#6a6a6a" stroke-width="0.8"/></svg>
<div id="t67" class="t" style="left:947.40px;transform:scaleX(0.8978);top:366.00px;font-size:8.5px;color:#dcdcdc;font-weight:normal;">Opacity:</div>
<div class="a" style="left:979px;top:363.5px;width:26px;height:14px;background:#4a4a4a;border:1px solid #464646"></div>
<div id="t68" class="t" style="left:983.00px;transform:scaleX(0.8736);top:366.00px;font-size:8.5px;color:#6e6e6e;font-weight:normal;">100%</div>
<div class="a" style="left:1006.5px;top:363.5px;width:11px;height:14px;background:#4a4a4a;border:1px solid #3e3e3e"></div>
<svg style="left:1009px;top:368px" width="6" height="4" viewBox="0 0 6 4"><path d="M0.6 0.6 L3 3 L5.4 0.6" fill="none" stroke="#d8d8d8" stroke-width="1"/></svg>
<div class="a" style="left:841px;top:381px;width:183px;height:1px;background:#4a4a4a;"></div>
<div id="t69" class="t" style="left:846.00px;transform:scaleX(0.8560);top:388.00px;font-size:8.5px;color:#dcdcdc;font-weight:normal;">Lock:</div>
<svg style="left:871px;top:387px" width="9" height="9" viewBox="0 0 9 9"><rect x="0.5" y="0.5" width="8" height="8" fill="none" stroke="#d8d8d8" stroke-width="1"/><rect x="1" y="1" width="2.3" height="2.3" fill="#d8d8d8"/><rect x="5.7" y="1" width="2.3" height="2.3" fill="#d8d8d8"/><rect x="3.3" y="3.3" width="2.3" height="2.3" fill="#d8d8d8"/><rect x="1" y="5.7" width="2.3" height="2.3" fill="#d8d8d8"/><rect x="5.7" y="5.7" width="2.3" height="2.3" fill="#d8d8d8"/></svg>
<svg style="left:888px;top:386px" width="10" height="11" viewBox="0 0 10 11"><path d="M9.2 0.8 L4.6 6" stroke="#8c8c8c" stroke-width="1.6" stroke-linecap="round"/><path d="M4 5.4 Q1.4 5.8 0.8 10.4 Q4.6 10 5.4 7 Z" fill="#8c8c8c"/></svg>
<svg style="left:906px;top:386px" width="11" height="11" viewBox="0 0 11 11"><path d="M5.5 0.5 V10.5 M0.5 5.5 H10.5" stroke="#e8e8e8" stroke-width="1.2"/><path d="M3.5 2.5 L5.5 0.5 L7.5 2.5 M3.5 8.5 L5.5 10.5 L7.5 8.5 M2.5 3.5 L0.5 5.5 L2.5 7.5 M8.5 3.5 L10.5 5.5 L8.5 7.5" fill="none" stroke="#e8e8e8" stroke-width="1.2"/></svg>
<svg style="left:920px;top:386px" width="12" height="12" viewBox="0 0 12 12"><path d="M2.5 0.5 V9.5 H11.5 M0.5 2.5 H9.5 V11.5" fill="none" stroke="#e0e0e0" stroke-width="1.2"/></svg>
<svg style="left:939px;top:386px" width="9" height="11" viewBox="0 0 9 11"><path d="M2.2 5 V3.2 Q2.2 0.8 4.5 0.8 Q6.8 0.8 6.8 3.2 V5" fill="none" stroke="#ececec" stroke-width="1.4"/><rect x="0.5" y="4.8" width="8" height="6" fill="#ececec"/><rect x="4" y="6.8" width="1" height="2" fill="#535353"/></svg>
<div id="t70" class="t" style="left:964.30px;transform:scaleX(0.8085);top:388.00px;font-size:8.5px;color:#dcdcdc;font-weight:normal;">Fill:</div>
<div class="a" style="left:979px;top:385.5px;width:26px;height:14px;background:#4a4a4a;border:1px solid #464646"></div>
<div id="t71" class="t" style="left:983.00px;transform:scaleX(0.8736);top:388.00px;font-size:8.5px;color:#6e6e6e;font-weight:normal;">100%</div>
<div class="a" style="left:1006.5px;top:385.5px;width:11px;height:14px;background:#4a4a4a;border:1px solid #3e3e3e"></div>
<svg style="left:1009px;top:390px" width="6" height="4" viewBox="0 0 6 4"><path d="M0.6 0.6 L3 3 L5.4 0.6" fill="none" stroke="#d8d8d8" stroke-width="1"/></svg>
<div class="a" style="left:841px;top:402px;width:183px;height:122px;background:#4c4c4c;"></div>
<div class="a" style="left:1011px;top:402px;width:1px;height:122px;background:#464646;"></div>
<div class="a" style="left:841px;top:403px;width:170px;height:1px;background:#474747;"></div>
<div class="a" style="left:841px;top:404px;width:170px;height:20px;background:#535353;"></div>
<div class="a" style="left:864.5px;top:404px;width:146.5px;height:20px;background:#6a6a6a;"></div>
<div class="a" style="left:841px;top:425px;width:170px;height:20px;background:#515151;"></div>
<div class="a" style="left:841px;top:446px;width:170px;height:20px;background:#515151;"></div>
<div class="a" style="left:841px;top:424px;width:170px;height:1px;background:#474747;"></div>
<div class="a" style="left:841px;top:445px;width:170px;height:1px;background:#474747;"></div>
<div class="a" style="left:841px;top:466px;width:170px;height:1px;background:#474747;"></div>
<svg style="left:847.5px;top:411.5px" width="11" height="7" viewBox="0 0 11 7"><path d="M0.5 3.5 Q5.5 -2 10.5 3.5 Q5.5 9 0.5 3.5 Z" fill="#ececec"/><circle cx="5.5" cy="3.6" r="1.8" fill="#535353"/></svg>
<svg style="left:847.5px;top:433px" width="11" height="7" viewBox="0 0 11 7"><path d="M0.5 3.5 Q5.5 -2 10.5 3.5 Q5.5 9 0.5 3.5 Z" fill="#ececec"/><circle cx="5.5" cy="3.6" r="1.8" fill="#535353"/></svg>
<div class="a" style="left:848px;top:453px;width:9px;height:9px;background:transparent;border:1px solid #5d5d5d"></div>
<svg style="left:865px;top:405px" width="28" height="18" viewBox="0 0 28 18"><path d="M0.6 4 V0.6 H4 M24 0.6 H27.4 V4 M27.4 14 V17.4 H24 M4 17.4 H0.6 V14" fill="none" stroke="#e6e6e6" stroke-width="1.1"/></svg>
<div class="a" style="left:873.6px;top:408.8px;width:11.6px;height:11.4px;background:#0c0c0c;"></div>
<svg style="left:893.5px;top:407px" width="7" height="14" viewBox="0 0 7 14"><rect x="0.8" y="0.8" width="5.4" height="6" rx="2.7" fill="none" stroke="#e0e0e0" stroke-width="1.1"/><rect x="0.8" y="7.2" width="5.4" height="6" rx="2.7" fill="none" stroke="#e0e0e0" stroke-width="1.1"/></svg>
<div class="a" style="left:904px;top:408px;width:23.2px;height:13.6px;background:#ffffff;"></div>
<div id="t72" class="t" style="left:934.60px;transform:scaleX(0.8271);top:411.00px;font-size:8.5px;color:#ececec;font-weight:normal;">Color Fill 1</div>
<svg style="left:867.8px;top:429.5px" width="23.2" height="13.5" viewBox="0 0 23.2 13.5"><rect width="23.2" height="13.5" fill="#fff"/><rect x="0.0" y="0.0" width="3.9" height="3.4" fill="#cfcfcf"/><rect x="0.0" y="6.8" width="3.9" height="3.4" fill="#cfcfcf"/><rect x="3.9" y="3.4" width="3.9" height="3.4" fill="#cfcfcf"/><rect x="3.9" y="10.2" width="3.9" height="3.4" fill="#cfcfcf"/><rect x="7.8" y="0.0" width="3.9" height="3.4" fill="#cfcfcf"/><rect x="7.8" y="6.8" width="3.9" height="3.4" fill="#cfcfcf"/><rect x="11.7" y="3.4" width="3.9" height="3.4" fill="#cfcfcf"/><rect x="11.7" y="10.2" width="3.9" height="3.4" fill="#cfcfcf"/><rect x="15.6" y="0.0" width="3.9" height="3.4" fill="#cfcfcf"/><rect x="15.6" y="6.8" width="3.9" height="3.4" fill="#cfcfcf"/><rect x="19.5" y="3.4" width="3.9" height="3.4" fill="#cfcfcf"/><rect x="19.5" y="10.2" width="3.9" height="3.4" fill="#cfcfcf"/><circle cx="11.6" cy="2.6" r="1" fill="#5a4a4a"/><path d="M11.6 3.6 V8 M10.9 8 V11.8 M12.3 8 V11.8" stroke="#6a6060" stroke-width="0.9"/></svg>
<div id="t73" class="t" style="left:898.80px;transform:scaleX(0.8604);top:432.00px;font-size:8.5px;color:#ececec;font-weight:normal;">Layer 2</div>
<svg style="left:867.8px;top:451px" width="23.2" height="13.8" viewBox="0 0 23.2 13.8"><rect width="23.2" height="13.8" fill="#fff"/><circle cx="11.6" cy="3" r="1.1" fill="#7a3a3a"/><path d="M11.6 4 V8 M10.9 8 V12 M12.3 8 V12" stroke="#806a6a" stroke-width="0.9"/></svg>
<div id="t74" class="t" style="left:898.80px;transform:scaleX(0.8604);top:454.00px;font-size:8.5px;color:#ececec;font-weight:normal;">Layer 1</div>
<div class="a" style="left:407px;top:64px;width:410px;height:309.5px;background:#555555;border-radius:5px;border:1px solid #3a6b9c;border-right:2px solid #25507a;border-bottom-color:#88a8c4;box-shadow:0 18px 34px -6px rgba(0,0,0,0.32),0 2px 10px rgba(0,0,0,0.10)"></div>
<div class="a" style="left:407px;top:64px;width:410px;height:24px;background:#0062b1;border-radius:5px 5px 0 0"></div>
<div id="t75" class="t" style="left:415.00px;top:72.00px;font-size:10.3px;color:#ffffff;font-weight:normal;">Color Picker (Solid Color)</div>
<svg style="left:800.5px;top:72px" width="8" height="8" viewBox="0 0 8 8"><path d="M0.4 0.4 L7.6 7.6 M7.6 0.4 L0.4 7.6" stroke="#d8e8f6" stroke-width="1"/></svg>
<div class="a" style="left:416px;top:112px;width:196px;height:195px;background:linear-gradient(to right,#ffffff,#ff0000);"></div>
<div class="a" style="left:416px;top:112px;width:196px;height:195px;background:linear-gradient(to bottom,rgba(0,0,0,0),#000000);"></div>
<svg style="left:417px;top:115px" width="10" height="10" viewBox="0 0 10 10"><circle cx="5" cy="5" r="3.8" fill="none" stroke="#111" stroke-width="1"/></svg>
<div class="a" style="left:620px;top:112px;width:16px;height:195px;background:linear-gradient(to bottom,#ff0000 0%,#ff00ff 16.67%,#0000ff 33.33%,#00ffff 50%,#00ff00 66.67%,#ffff00 83.33%,#ff0000 100%);"></div>
<svg style="left:613.5px;top:303.5px" width="6" height="7" viewBox="0 0 6 7"><path d="M0.5 0.5 L5.5 3.5 L0.5 6.5 Z" fill="#ececec"/></svg>
<svg style="left:636.5px;top:303.5px" width="6" height="7" viewBox="0 0 6 7"><path d="M5.5 0.5 L0.5 3.5 L5.5 6.5 Z" fill="#ececec"/></svg>
<div id="t76" class="t" style="left:658.50px;transform:scaleX(0.9749);top:113.00px;font-size:9.5px;color:#dcdcdc;font-weight:normal;">new</div>
<div class="a" style="left:645px;top:125px;width:45px;height:25px;background:#f3eaec;"></div>
<div class="a" style="left:645px;top:150px;width:45px;height:26px;background:#0e0e0e;"></div>
<div id="t77" class="t" style="left:652.00px;transform:scaleX(1.0143);top:178.00px;font-size:9.5px;color:#dcdcdc;font-weight:normal;">current</div>
<svg style="left:697.5px;top:153.5px" width="10" height="10" viewBox="0 0 10 10"><path d="M5 0.7 L9 2.8 V7.2 L5 9.3 L1 7.2 V2.8 Z M1 2.8 L5 4.9 L9 2.8 M5 4.9 V9.3" fill="none" stroke="#d0d0d0" stroke-width="0.9"/></svg>
<div class="a" style="left:698px;top:165.5px;width:9px;height:9.5px;background:#ffffff;"></div>
<div class="a" style="left:720px;top:96px;width:88px;height:19px;background:transparent;border:1.5px solid #d6d6d6;border-radius:10px"></div>
<div id="t78" class="t" style="left:757.50px;transform:scaleX(0.9369);top:101.00px;font-size:9.6px;color:#e6e6e6;font-weight:normal;">OK</div>
<div class="a" style="left:720px;top:122.5px;width:88px;height:18.5px;background:transparent;border:1px solid #7c7c7c;border-radius:10px"></div>
<div id="t79" class="t" style="left:750.00px;transform:scaleX(0.9372);top:127.00px;font-size:9.6px;color:#e6e6e6;font-weight:normal;">Cancel</div>
<div class="a" style="left:720px;top:154px;width:88px;height:18.5px;background:transparent;border:1px solid #7c7c7c;border-radius:10px"></div>
<div id="t80" class="t" style="left:728.50px;transform:scaleX(0.9861);top:159.00px;font-size:9.6px;color:#e6e6e6;font-weight:normal;">Add to Swatches</div>
<div class="a" style="left:720px;top:186px;width:88px;height:19px;background:transparent;border:1px solid #7c7c7c;border-radius:10px"></div>
<div id="t81" class="t" style="left:734.00px;transform:scaleX(0.9617);top:191.00px;font-size:9.6px;color:#e6e6e6;font-weight:normal;">Color Libraries</div>
<svg style="left:644.5px;top:220.0px" width="11" height="11" viewBox="0 0 11 11"><circle cx="5.5" cy="5.5" r="4.6" fill="#f0f0f0"/><circle cx="5.5" cy="5.5" r="1.9" fill="#1a1a1a"/></svg>
<div id="t82" class="t" style="left:659.70px;top:221.00px;font-size:9.5px;color:#dedede;font-weight:normal;">H:</div>
<div class="a" style="left:679.5px;top:217.5px;width:27px;height:16px;background:#474747;border:1px solid #5e5e5e"></div>
<div id="t83" class="t" style="left:684.50px;top:221.00px;font-size:9.5px;color:#e8e8e8;font-weight:normal;">0</div>
<div id="t84" class="t" style="left:711.50px;top:222.00px;font-size:9.5px;color:#dedede;font-weight:normal;">°</div>
<svg style="left:644.5px;top:240.5px" width="11" height="11" viewBox="0 0 11 11"><circle cx="5.5" cy="5.5" r="4.6" fill="#4e4e4e" stroke="#7a7a7a" stroke-width="0.9"/></svg>
<div id="t85" class="t" style="left:659.70px;top:241.00px;font-size:9.5px;color:#dedede;font-weight:normal;">S:</div>
<div class="a" style="left:679.5px;top:238px;width:27px;height:16px;background:#474747;border:1px solid #5e5e5e"></div>
<div id="t86" class="t" style="left:684.50px;top:241.00px;font-size:9.5px;color:#e8e8e8;font-weight:normal;">4</div>
<div id="t87" class="t" style="left:709.80px;top:242.00px;font-size:9.5px;color:#dedede;font-weight:normal;">%</div>
<svg style="left:644.5px;top:261.1px" width="11" height="11" viewBox="0 0 11 11"><circle cx="5.5" cy="5.5" r="4.6" fill="#4e4e4e" stroke="#7a7a7a" stroke-width="0.9"/></svg>
<div id="t88" class="t" style="left:659.70px;top:262.00px;font-size:9.5px;color:#dedede;font-weight:normal;">B:</div>
<div class="a" style="left:679.5px;top:258.6px;width:27px;height:16px;background:#474747;border:1px solid #5e5e5e"></div>
<div id="t89" class="t" style="left:684.50px;top:262.00px;font-size:9.5px;color:#e8e8e8;font-weight:normal;">96</div>
<div id="t90" class="t" style="left:709.80px;top:263.00px;font-size:9.5px;color:#dedede;font-weight:normal;">%</div>
<svg style="left:644.5px;top:284.9px" width="11" height="11" viewBox="0 0 11 11"><circle cx="5.5" cy="5.5" r="4.6" fill="#4e4e4e" stroke="#7a7a7a" stroke-width="0.9"/></svg>
<div id="t91" class="t" style="left:659.70px;top:286.00px;font-size:9.5px;color:#dedede;font-weight:normal;">R:</div>
<div class="a" style="left:679.5px;top:282.4px;width:27px;height:16px;background:#474747;border:1px solid #5e5e5e"></div>
<div id="t92" class="t" style="left:684.50px;top:286.00px;font-size:9.5px;color:#e8e8e8;font-weight:normal;">244</div>
<svg style="left:644.5px;top:305.4px" width="11" height="11" viewBox="0 0 11 11"><circle cx="5.5" cy="5.5" r="4.6" fill="#4e4e4e" stroke="#7a7a7a" stroke-width="0.9"/></svg>
<div id="t93" class="t" style="left:659.70px;top:306.00px;font-size:9.5px;color:#dedede;font-weight:normal;">G:</div>
<div class="a" style="left:679.5px;top:302.9px;width:27px;height:16px;background:#474747;border:1px solid #5e5e5e"></div>
<div id="t94" class="t" style="left:684.50px;top:306.00px;font-size:9.5px;color:#e8e8e8;font-weight:normal;">235</div>
<svg style="left:644.5px;top:326.0px" width="11" height="11" viewBox="0 0 11 11"><circle cx="5.5" cy="5.5" r="4.6" fill="#4e4e4e" stroke="#7a7a7a" stroke-width="0.9"/></svg>
<div id="t95" class="t" style="left:659.70px;top:327.00px;font-size:9.5px;color:#dedede;font-weight:normal;">B:</div>
<div class="a" style="left:679.5px;top:323.5px;width:27px;height:16px;background:#474747;border:1px solid #5e5e5e"></div>
<div id="t96" class="t" style="left:684.50px;top:327.00px;font-size:9.5px;color:#e8e8e8;font-weight:normal;">235</div>
<div id="t97" class="t" style="left:647.00px;top:351.00px;font-size:9.5px;color:#bdbdbd;font-weight:normal;">#</div>
<div class="a" style="left:658.0px;top:347.5px;width:61.5px;height:16px;background:#474747;border:1px solid #5e5e5e"></div>
<div id="t98" class="t" style="left:662.50px;top:351.00px;font-size:9.5px;color:#e8e8e8;font-weight:normal;">f4ebeb</div>
<svg style="left:729.5px;top:220.0px" width="11" height="11" viewBox="0 0 11 11"><circle cx="5.5" cy="5.5" r="4.6" fill="#4e4e4e" stroke="#7a7a7a" stroke-width="0.9"/></svg>
<div id="t99" class="t" style="left:744.40px;top:221.00px;font-size:9.5px;color:#dedede;font-weight:normal;">L:</div>
<div class="a" style="left:764.5px;top:217.5px;width:32.5px;height:16px;background:#474747;border:1px solid #5e5e5e"></div>
<div id="t100" class="t" style="left:769.00px;top:221.00px;font-size:9.5px;color:#e8e8e8;font-weight:normal;">94</div>
<svg style="left:729.5px;top:240.5px" width="11" height="11" viewBox="0 0 11 11"><circle cx="5.5" cy="5.5" r="4.6" fill="#4e4e4e" stroke="#7a7a7a" stroke-width="0.9"/></svg>
<div id="t101" class="t" style="left:744.40px;top:241.00px;font-size:9.5px;color:#dedede;font-weight:normal;">a:</div>
<div class="a" style="left:764.5px;top:238px;width:32.5px;height:16px;background:#474747;border:1px solid #5e5e5e"></div>
<div id="t102" class="t" style="left:769.00px;top:241.00px;font-size:9.5px;color:#e8e8e8;font-weight:normal;">3</div>
<svg style="left:729.5px;top:261.1px" width="11" height="11" viewBox="0 0 11 11"><circle cx="5.5" cy="5.5" r="4.6" fill="#4e4e4e" stroke="#7a7a7a" stroke-width="0.9"/></svg>
<div id="t103" class="t" style="left:744.40px;top:262.00px;font-size:9.5px;color:#dedede;font-weight:normal;">b:</div>
<div class="a" style="left:764.5px;top:258.6px;width:32.5px;height:16px;background:#474747;border:1px solid #5e5e5e"></div>
<div id="t104" class="t" style="left:769.00px;top:262.00px;font-size:9.5px;color:#e8e8e8;font-weight:normal;">1</div>
<div id="t105" class="t" style="left:750.50px;top:286.00px;font-size:9.5px;color:#dedede;font-weight:normal;">C:</div>
<div class="a" style="left:764.5px;top:282.4px;width:26.5px;height:16px;background:#474747;border:1px solid #5e5e5e"></div>
<div id="t106" class="t" style="left:769.00px;top:286.00px;font-size:9.5px;color:#e8e8e8;font-weight:normal;">3</div>
<div id="t107" class="t" style="left:796.30px;top:286.00px;font-size:9.5px;color:#dedede;font-weight:normal;">%</div>
<div id="t108" class="t" style="left:749.44px;top:306.00px;font-size:9.5px;color:#dedede;font-weight:normal;">M:</div>
<div class="a" style="left:764.5px;top:302.9px;width:26.5px;height:16px;background:#474747;border:1px solid #5e5e5e"></div>
<div id="t109" class="t" style="left:769.00px;top:306.00px;font-size:9.5px;color:#e8e8e8;font-weight:normal;">7</div>
<div id="t110" class="t" style="left:796.30px;top:307.00px;font-size:9.5px;color:#dedede;font-weight:normal;">%</div>
<div id="t111" class="t" style="left:751.55px;top:327.00px;font-size:9.5px;color:#dedede;font-weight:normal;">Y:</div>
<div class="a" style="left:764.5px;top:323.5px;width:26.5px;height:16px;background:#474747;border:1px solid #5e5e5e"></div>
<div id="t112" class="t" style="left:769.00px;top:327.00px;font-size:9.5px;color:#e8e8e8;font-weight:normal;">4</div>
<div id="t113" class="t" style="left:796.30px;top:328.00px;font-size:9.5px;color:#dedede;font-weight:normal;">%</div>
<div id="t114" class="t" style="left:751.02px;top:348.00px;font-size:9.5px;color:#dedede;font-weight:normal;">K:</div>
<div class="a" style="left:764.5px;top:345px;width:26.5px;height:16px;background:#474747;border:1px solid #5e5e5e"></div>
<div id="t115" class="t" style="left:769.00px;top:348.00px;font-size:9.5px;color:#e8e8e8;font-weight:normal;">0</div>
<div id="t116" class="t" style="left:796.30px;top:349.00px;font-size:9.5px;color:#dedede;font-weight:normal;">%</div>
<div class="a" style="left:415px;top:318px;width:10px;height:10px;background:#4a4a4a;border:1px solid #777"></div>
<div id="t117" class="t" style="left:430.50px;transform:scaleX(0.9701);top:318.00px;font-size:9.5px;color:#dcdcdc;font-weight:normal;">Only Web Colors</div>
<svg style="left:819px;top:37px" width="14" height="2" viewBox="0 0 14 2"><rect x="0" y="0" width="1" height="1" fill="#5c5c5c"/><rect x="2" y="0" width="1" height="1" fill="#5c5c5c"/><rect x="4" y="0" width="1" height="1" fill="#5c5c5c"/><rect x="6" y="0" width="1" height="1" fill="#5c5c5c"/><rect x="8" y="0" width="1" height="1" fill="#5c5c5c"/><rect x="10" y="0" width="1" height="1" fill="#5c5c5c"/><rect x="12" y="0" width="1" height="1" fill="#5c5c5c"/></svg>
<svg style="left:819px;top:67px" width="14" height="2" viewBox="0 0 14 2"><rect x="0" y="0" width="1" height="1" fill="#5c5c5c"/><rect x="2" y="0" width="1" height="1" fill="#5c5c5c"/><rect x="4" y="0" width="1" height="1" fill="#5c5c5c"/><rect x="6" y="0" width="1" height="1" fill="#5c5c5c"/><rect x="8" y="0" width="1" height="1" fill="#5c5c5c"/><rect x="10" y="0" width="1" height="1" fill="#5c5c5c"/><rect x="12" y="0" width="1" height="1" fill="#5c5c5c"/></svg>
<svg style="left:819px;top:98px" width="14" height="2" viewBox="0 0 14 2"><rect x="0" y="0" width="1" height="1" fill="#5c5c5c"/><rect x="2" y="0" width="1" height="1" fill="#5c5c5c"/><rect x="4" y="0" width="1" height="1" fill="#5c5c5c"/><rect x="6" y="0" width="1" height="1" fill="#5c5c5c"/><rect x="8" y="0" width="1" height="1" fill="#5c5c5c"/><rect x="10" y="0" width="1" height="1" fill="#5c5c5c"/><rect x="12" y="0" width="1" height="1" fill="#5c5c5c"/></svg>
<svg style="left:819px;top:130px" width="14" height="2" viewBox="0 0 14 2"><rect x="0" y="0" width="1" height="1" fill="#5c5c5c"/><rect x="2" y="0" width="1" height="1" fill="#5c5c5c"/><rect x="4" y="0" width="1" height="1" fill="#5c5c5c"/><rect x="6" y="0" width="1" height="1" fill="#5c5c5c"/><rect x="8" y="0" width="1" height="1" fill="#5c5c5c"/><rect x="10" y="0" width="1" height="1" fill="#5c5c5c"/><rect x="12" y="0" width="1" height="1" fill="#5c5c5c"/></svg>
<svg style="left:819px;top:162px" width="14" height="2" viewBox="0 0 14 2"><rect x="0" y="0" width="1" height="1" fill="#5c5c5c"/><rect x="2" y="0" width="1" height="1" fill="#5c5c5c"/><rect x="4" y="0" width="1" height="1" fill="#5c5c5c"/><rect x="6" y="0" width="1" height="1" fill="#5c5c5c"/><rect x="8" y="0" width="1" height="1" fill="#5c5c5c"/><rect x="10" y="0" width="1" height="1" fill="#5c5c5c"/><rect x="12" y="0" width="1" height="1" fill="#5c5c5c"/></svg>
<svg style="left:819px;top:215px" width="14" height="2" viewBox="0 0 14 2"><rect x="0" y="0" width="1" height="1" fill="#5c5c5c"/><rect x="2" y="0" width="1" height="1" fill="#5c5c5c"/><rect x="4" y="0" width="1" height="1" fill="#5c5c5c"/><rect x="6" y="0" width="1" height="1" fill="#5c5c5c"/><rect x="8" y="0" width="1" height="1" fill="#5c5c5c"/><rect x="10" y="0" width="1" height="1" fill="#5c5c5c"/><rect x="12" y="0" width="1" height="1" fill="#5c5c5c"/></svg>
<svg style="left:819px;top:246px" width="14" height="2" viewBox="0 0 14 2"><rect x="0" y="0" width="1" height="1" fill="#5c5c5c"/><rect x="2" y="0" width="1" height="1" fill="#5c5c5c"/><rect x="4" y="0" width="1" height="1" fill="#5c5c5c"/><rect x="6" y="0" width="1" height="1" fill="#5c5c5c"/><rect x="8" y="0" width="1" height="1" fill="#5c5c5c"/><rect x="10" y="0" width="1" height="1" fill="#5c5c5c"/><rect x="12" y="0" width="1" height="1" fill="#5c5c5c"/></svg>
<svg style="left:819px;top:277px" width="14" height="2" viewBox="0 0 14 2"><rect x="0" y="0" width="1" height="1" fill="#5c5c5c"/><rect x="2" y="0" width="1" height="1" fill="#5c5c5c"/><rect x="4" y="0" width="1" height="1" fill="#5c5c5c"/><rect x="6" y="0" width="1" height="1" fill="#5c5c5c"/><rect x="8" y="0" width="1" height="1" fill="#5c5c5c"/><rect x="10" y="0" width="1" height="1" fill="#5c5c5c"/><rect x="12" y="0" width="1" height="1" fill="#5c5c5c"/></svg>
<svg style="left:819px;top:307px" width="14" height="2" viewBox="0 0 14 2"><rect x="0" y="0" width="1" height="1" fill="#5c5c5c"/><rect x="2" y="0" width="1" height="1" fill="#5c5c5c"/><rect x="4" y="0" width="1" height="1" fill="#5c5c5c"/><rect x="6" y="0" width="1" height="1" fill="#5c5c5c"/><rect x="8" y="0" width="1" height="1" fill="#5c5c5c"/><rect x="10" y="0" width="1" height="1" fill="#5c5c5c"/><rect x="12" y="0" width="1" height="1" fill="#5c5c5c"/></svg>
<svg style="left:819px;top:339px" width="14" height="2" viewBox="0 0 14 2"><rect x="0" y="0" width="1" height="1" fill="#5c5c5c"/><rect x="2" y="0" width="1" height="1" fill="#5c5c5c"/><rect x="4" y="0" width="1" height="1" fill="#5c5c5c"/><rect x="6" y="0" width="1" height="1" fill="#5c5c5c"/><rect x="8" y="0" width="1" height="1" fill="#5c5c5c"/><rect x="10" y="0" width="1" height="1" fill="#5c5c5c"/><rect x="12" y="0" width="1" height="1" fill="#5c5c5c"/></svg>
<svg style="left:819px;top:43.5px" width="13" height="14" viewBox="0 0 13 14"><rect x="0.6" y="0.6" width="3.2" height="3.2" fill="none" stroke="#dedede" stroke-width="1"/><rect x="0.6" y="5" width="3.2" height="3.2" fill="none" stroke="#dedede" stroke-width="1"/><rect x="0.1" y="9.4" width="4.2" height="4.2" fill="#dedede"/><path d="M8.2 3.4 Q11.4 4.6 11 8.2 Q10.6 11.6 7.6 12.8" fill="none" stroke="#dedede" stroke-width="1.5"/><path d="M6 3.2 L9.6 0.8 L9.4 5.8 Z" fill="#dedede"/></svg>
<svg style="left:816.6px;top:75.4px" width="5" height="7" viewBox="0 0 5 7"><rect x="0" y="0" width="1.2" height="1.2" fill="#dedede"/><rect x="0" y="2.8" width="1.2" height="1.2" fill="#dedede"/><rect x="0" y="5.6" width="1.2" height="1.2" fill="#dedede"/><rect x="2" y="0" width="3" height="1" fill="#dedede"/><rect x="2" y="2.8" width="3" height="1" fill="#dedede"/><rect x="2" y="5.6" width="3" height="1" fill="#dedede"/></svg>
<svg style="left:819.5px;top:77px" width="13" height="12" viewBox="0 0 13 12"><path d="M12.3 0.7 L5.6 6.8" stroke="#dedede" stroke-width="1.8" stroke-linecap="round"/><path d="M4.8 6.2 Q1.5 6.2 1 11.3 Q5.5 11 6.4 8 Z" fill="#dedede"/></svg>
<svg style="left:816.6px;top:106.3px" width="5" height="7" viewBox="0 0 5 7"><rect x="0" y="0" width="1.2" height="1.2" fill="#dedede"/><rect x="0" y="2.8" width="1.2" height="1.2" fill="#dedede"/><rect x="0" y="5.6" width="1.2" height="1.2" fill="#dedede"/><rect x="2" y="0" width="3" height="1" fill="#dedede"/><rect x="2" y="2.8" width="3" height="1" fill="#dedede"/><rect x="2" y="5.6" width="3" height="1" fill="#dedede"/></svg>
<svg style="left:820.5px;top:107px" width="12" height="13" viewBox="0 0 12 13"><circle cx="6" cy="2.8" r="2.5" fill="#dedede"/><path d="M4.5 4.5 H7.5 L7.8 7.3 H11.2 V9.6 H0.8 V7.3 H4.2 Z" fill="#dedede"/><rect x="1.5" y="10.6" width="9" height="2" fill="#dedede"/></svg>
<svg style="left:819.5px;top:138px" width="12" height="14" viewBox="0 0 12 14"><path d="M0.6 11.8 L4.4 1.8 L8.2 11.8 M1.9 8.4 H6.9" fill="none" stroke="#dedede" stroke-width="1.3"/><rect x="9.8" y="0.5" width="1" height="13" fill="#dedede"/></svg>
<svg style="left:817px;top:169px" width="14" height="14" viewBox="0 0 14 14"><rect x="0.5" y="8.3" width="3.6" height="3.6" fill="none" stroke="#dedede" stroke-width="1"/><rect x="2.3" y="9.8" width="3.6" height="3.6" fill="#dedede"/><path d="M9 0.8 H12.6 V11 M10.8 0.8 V11" stroke="#dedede" stroke-width="1.1" fill="none"/><path d="M9.5 0.8 Q6 1 6 3.8 Q6 6.6 9.5 6.6 Z" fill="#dedede"/></svg>
<svg style="left:817.5px;top:191.5px" width="15" height="14" viewBox="0 0 15 14"><rect x="0.5" y="7.5" width="3.4" height="3.4" fill="none" stroke="#dedede" stroke-width="1"/><rect x="2.2" y="9.2" width="3.4" height="3.4" fill="#dedede"/><path d="M6.6 9.6 L10.2 0.8 L13.8 9.6 M7.9 6.6 H12.5" fill="none" stroke="#dedede" stroke-width="1.3"/></svg>
<svg style="left:817px;top:222.5px" width="16" height="15" viewBox="0 0 16 15"><circle cx="2.8" cy="2.8" r="2" fill="none" stroke="#dedede" stroke-width="1.2"/><path d="M4.3 4.2 L13.8 13" stroke="#dedede" stroke-width="1.5"/><circle cx="12.8" cy="10.8" r="2" fill="none" stroke="#dedede" stroke-width="1.2"/><path d="M14.5 0.8 L6 8.3" stroke="#dedede" stroke-width="1.5"/><path d="M6.8 7.5 L2 12.5 L1.2 14 L2.8 13.4 L7.8 8.5 Z" fill="#dedede"/></svg>
<svg style="left:818.5px;top:254px" width="13" height="14" viewBox="0 0 13 14"><path d="M6.5 0.7 L12.2 3.7 V10.3 L6.5 13.3 L0.8 10.3 V3.7 Z M0.8 3.7 L6.5 6.7 L12.2 3.7 M6.5 6.7 V13.3" fill="none" stroke="#dedede" stroke-width="1.2" stroke-linejoin="round"/></svg>
<svg style="left:818px;top:285px" width="14" height="14" viewBox="0 0 14 14"><rect x="0.6" y="2.6" width="10.8" height="10.8" fill="none" stroke="#dedede" stroke-width="1.1"/><path d="M2.6 2.6 V0.6 H13.4 V11.4 H11.4" fill="none" stroke="#dedede" stroke-width="1.1"/><path d="M6.5 2.6 V7.5 L7.8 6.3 L9.1 7.5 V2.6 Z" fill="#dedede"/></svg>
<svg style="left:818.5px;top:315px" width="14" height="15" viewBox="0 0 14 15"><path d="M1.5 13.5 Q4.5 12.5 6.5 7 Q8 2.5 10 1.5 L10.8 13.5 M5.5 8.6 H11.5" fill="none" stroke="#dedede" stroke-width="1.7"/><path d="M1.2 4.2 Q3 1.2 6 2.2 Q8 2.8 10 1.5" fill="none" stroke="#dedede" stroke-width="1.3"/><path d="M9 13.5 H12.8" stroke="#dedede" stroke-width="1.2"/></svg>
<svg style="left:818px;top:347.5px" width="14" height="14" viewBox="0 0 14 14"><circle cx="8.5" cy="8.5" r="4.5" fill="none" stroke="#dedede" stroke-width="1.3"/><path d="M4.5 0.8 L8.6 8.2 H0.4 Z" fill="#dedede"/></svg>
</body></html>
